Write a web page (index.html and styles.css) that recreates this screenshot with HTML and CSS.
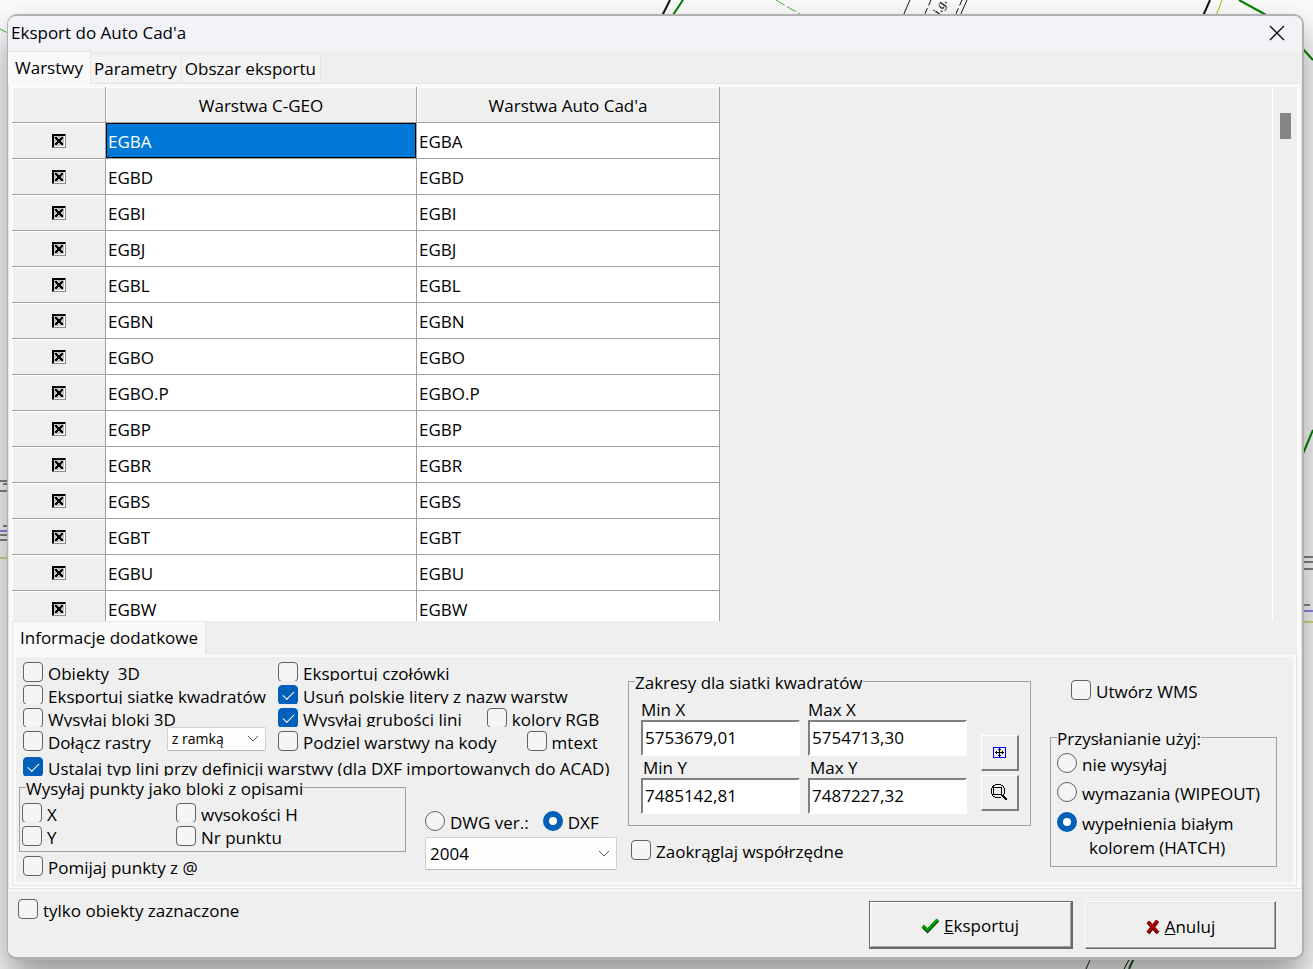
FILE: index.html
```html
<!DOCTYPE html>
<html lang="pl">
<head>
<meta charset="utf-8">
<title>Eksport do Auto Cad'a</title>
<link rel="stylesheet" href="styles.css">
</head>
<body>
<svg class="map" viewBox="0 0 1313 969" preserveAspectRatio="none" fill="none" aria-hidden="true">
  <g stroke="#008000" stroke-width="2">
    <path d="M683 0L673 15M1239 0L1268 16M1302 48L1313 60M1302 456L1313 430"/>
    <path d="M1134 958L1129 969" stroke="#205020"/>
  </g>
  <path d="M776 0L803 16M0 29L8 33" stroke="#40b040" stroke-dasharray="10 3"/>
  <g stroke="#111">
    <path d="M670 0L662 16M1210 0L1203 16" stroke-width="2"/>
    <path d="M910 0L903 16M967 0L960 16M1090 960L1086 969M1130 958L1124 969M0 481H8M3 484H8M0 491H8M3 526H8M0 535H8M0 540H8M1302 557H1313M1302 562H1313M1302 569H1313M1302 605H1310"/>
    <path d="M931 0L924 16M962 0L955 16" stroke-dasharray="6 3"/>
  </g>
  <path d="M1222 0L1216 16M0 558H8M1302 622H1313" stroke="#b8b000"/>
  <path d="M0 531H8M1302 611H1313" stroke="#2020d0"/>
  <text x="940" y="16" transform="rotate(-65 940 16)" class="map-text">j.g.</text>
</svg>

<main class="window">
  <header class="titlebar">
    <h1>Eksport do Auto Cad'a</h1>
    <button class="close" type="button" aria-label="Zamknij">
      <svg width="16" height="16" viewBox="0 0 16 16"><path d="M1 1L15 15M15 1L1 15" stroke="#111" stroke-width="1.4"/></svg>
    </button>
  </header>

  <nav class="tabs" role="tablist">
    <button class="tab active" type="button" role="tab" aria-selected="true">Warstwy</button>
    <button class="tab" type="button" role="tab">Parametry</button>
    <button class="tab" type="button" role="tab">Obszar eksportu</button>
  </nav>

  <section class="pane">
    <div class="grid-area">
      <div class="grid-scroll">
        <table class="layers">
          <colgroup><col class="col-mark"><col class="col-geo"><col class="col-cad"></colgroup>
          <thead><tr><th></th><th>Warstwa C-GEO</th><th>Warstwa Auto Cad'a</th></tr></thead>
          <tbody>
            <tr><td><input type="checkbox" class="mark" aria-label="EGBA" checked></td><td class="selected">EGBA</td><td>EGBA</td></tr>
            <tr><td><input type="checkbox" class="mark" aria-label="EGBD" checked></td><td>EGBD</td><td>EGBD</td></tr>
            <tr><td><input type="checkbox" class="mark" aria-label="EGBI" checked></td><td>EGBI</td><td>EGBI</td></tr>
            <tr><td><input type="checkbox" class="mark" aria-label="EGBJ" checked></td><td>EGBJ</td><td>EGBJ</td></tr>
            <tr><td><input type="checkbox" class="mark" aria-label="EGBL" checked></td><td>EGBL</td><td>EGBL</td></tr>
            <tr><td><input type="checkbox" class="mark" aria-label="EGBN" checked></td><td>EGBN</td><td>EGBN</td></tr>
            <tr><td><input type="checkbox" class="mark" aria-label="EGBO" checked></td><td>EGBO</td><td>EGBO</td></tr>
            <tr><td><input type="checkbox" class="mark" aria-label="EGBO.P" checked></td><td>EGBO.P</td><td>EGBO.P</td></tr>
            <tr><td><input type="checkbox" class="mark" aria-label="EGBP" checked></td><td>EGBP</td><td>EGBP</td></tr>
            <tr><td><input type="checkbox" class="mark" aria-label="EGBR" checked></td><td>EGBR</td><td>EGBR</td></tr>
            <tr><td><input type="checkbox" class="mark" aria-label="EGBS" checked></td><td>EGBS</td><td>EGBS</td></tr>
            <tr><td><input type="checkbox" class="mark" aria-label="EGBT" checked></td><td>EGBT</td><td>EGBT</td></tr>
            <tr><td><input type="checkbox" class="mark" aria-label="EGBU" checked></td><td>EGBU</td><td>EGBU</td></tr>
            <tr><td><input type="checkbox" class="mark" aria-label="EGBW" checked></td><td>EGBW</td><td>EGBW</td></tr>
          </tbody>
        </table>
      </div>
      <div class="scrollbar"><div class="thumb"></div></div>
    </div>

    <div class="tabs subtabs" role="tablist">
      <button class="tab active" type="button" role="tab" aria-selected="true">Informacje dodatkowe</button>
    </div>

    <div class="subpane">
      <div class="options">
        <div class="opt-left">
          <div class="pairs">
            <div class="row"><label class="check"><input type="checkbox">Obiekty&nbsp; 3D</label></div>
            <div class="row"><label class="check cut"><input type="checkbox">Eksportuj czołówki</label></div>
            <div class="row"><label class="check cut"><input type="checkbox">Eksportuj siatkę kwadratów</label></div>
            <div class="row"><label class="check cut"><input type="checkbox" checked>Usuń polskie litery z nazw warstw</label></div>
            <div class="row"><label class="check cut"><input type="checkbox">Wysyłaj bloki 3D</label></div>
            <div class="row split-a"><label class="check cut"><input type="checkbox" checked>Wysyłaj grubości lini</label><label class="check cut"><input type="checkbox">kolory RGB</label></div>
            <div class="row raster"><label class="check"><input type="checkbox">Dołącz rastry</label>
              <span class="combo small"><select aria-label="Ramka rastra"><option>z ramką</option></select><svg width="12" height="7" viewBox="0 0 12 7"><path d="M1 1L6 6L11 1"/></svg></span></div>
            <div class="row split-b"><label class="check"><input type="checkbox">Podziel warstwy na kody</label><label class="check"><input type="checkbox">mtext</label></div>
          </div>
          <label class="check cut wide"><input type="checkbox" checked>Ustalaj typ lini przy definicji warstwy (dla DXF importowanych do ACAD)</label>
          <div class="lower">
            <div class="points">
              <fieldset class="group">
                <legend>Wysyłaj punkty jako bloki z opisami</legend>
                <div class="points-body">
                  <label class="check cut"><input type="checkbox">X</label>
                  <label class="check cut"><input type="checkbox">wysokości H</label>
                  <label class="check"><input type="checkbox">Y</label>
                  <label class="check"><input type="checkbox">Nr punktu</label>
                </div>
              </fieldset>
              <label class="check skip"><input type="checkbox">Pomijaj punkty z @</label>
            </div>
            <div class="format">
              <div class="format-row">
                <label class="check"><input type="radio" name="format">DWG ver.:</label>
                <label class="check"><input type="radio" name="format" checked>DXF</label>
              </div>
              <span class="combo"><select aria-label="Wersja"><option>2004</option></select><svg width="12" height="7" viewBox="0 0 12 7"><path d="M1 1L6 6L11 1"/></svg></span>
            </div>
          </div>
        </div>

        <div class="opt-mid">
          <fieldset class="group">
            <legend>Zakresy dla siatki kwadratów</legend>
            <div class="ranges">
              <div class="fields">
                <label class="field">Min X<input type="text" value="5753679,01"></label>
                <label class="field">Max X<input type="text" value="5754713,30"></label>
                <label class="field"><span class="indent">Min Y</span><input type="text" value="7485142,81"></label>
                <label class="field"><span class="indent">Max Y</span><input type="text" value="7487227,32"></label>
              </div>
              <div class="tools">
                <button class="tool" type="button" aria-label="Cały zakres">
                  <svg width="13" height="11" viewBox="0 0 13 11" shape-rendering="crispEdges"><path d="M0 0H13V11H0ZM1 1V10H12V1Z" fill="#00f" fill-rule="evenodd"/><path d="M6 1H7V10H6ZM2 5H11V6H2ZM5 2H8V3H5ZM5 8H8V9H5ZM3 4H4V7H3ZM9 4H10V7H9Z" fill="#000"/></svg>
                </button>
                <button class="tool" type="button" aria-label="Wskaż zakres">
                  <svg width="17" height="17" viewBox="0 0 17 17" shape-rendering="crispEdges"><path d="M4 0H10V1H4ZM2 1H4V2H2ZM10 1H12V2H10ZM1 2H2V4H1ZM12 2H13V4H12ZM0 4H1V10H0ZM13 4H14V10H13ZM1 10H2V12H1ZM12 10H13V11H12ZM2 12H4V13H2ZM4 13H10V14H4ZM3 3H11V4H3ZM2 2H3V11H2ZM10 3H11V11H10ZM3 10H11V11H3ZM10 11H13V12H10ZM11 12H14V13H11ZM12 13H15V14H12ZM13 14H16V15H13ZM14 15H16V16H14Z" fill="#000"/></svg>
                </button>
              </div>
            </div>
          </fieldset>
          <label class="check round"><input type="checkbox">Zaokrąglaj współrzędne</label>
        </div>

        <div class="opt-right">
          <label class="check wms"><input type="checkbox">Utwórz WMS</label>
          <fieldset class="group">
            <legend>Przysłanianie użyj:</legend>
            <div class="cover">
              <label class="check"><input type="radio" name="cover">nie wysyłaj</label>
              <label class="check"><input type="radio" name="cover">wymazania (WIPEOUT)</label>
              <label class="check two-line"><input type="radio" name="cover" checked><span>wypełnienia białym<span class="second">kolorem (HATCH)</span></span></label>
            </div>
          </fieldset>
        </div>
      </div>
    </div>
  </section>

  <footer class="footer">
    <label class="check"><input type="checkbox">tylko obiekty zaznaczone</label>
    <div class="actions">
      <button class="action default" type="button">
        <svg width="17" height="16" viewBox="0 0 17 16"><path d="M1 8.5L5.5 13L16 2" fill="none" stroke="#003c10" stroke-width="3.6"/><path d="M1 7.5L5.5 12L15.5 1.5" fill="none" stroke="#00a000" stroke-width="2.6"/></svg>
        <span><u>E</u>ksportuj</span>
      </button>
      <button class="action" type="button">
        <svg width="14" height="16" viewBox="0 0 14 16"><path d="M2 3L12 14M11.500 2L2 14" fill="none" stroke="#500" stroke-width="4"/><path d="M2 2.500L11.500 13M11.500 1.500L2 13" fill="none" stroke="#b00000" stroke-width="2.600"/></svg>
        <span><u>A</u>nuluj</span>
      </button>
    </div>
  </footer>
</main>
</body>
</html>
```

FILE: styles.css
```css
* { box-sizing: border-box; }

body {
  margin: 0;
  min-height: 100vh;
  display: flex;
  padding: 14px 9px 9px 7px;
  background: #fafafa;
  color: #000;
  font: 17px/20px "Open Sans", "Noto Sans", sans-serif;
  overflow: hidden;
}

button, input, select { font: inherit; color: inherit; }
button { padding: 0; }

.map {
  position: absolute;
  inset: 0;
  width: 100%;
  height: 100%;
}
.map-text { font: italic 13px "Liberation Serif", serif; fill: #000; }

.window {
  position: relative;
  flex: 1;
  min-width: 0;
  display: flex;
  flex-direction: column;
  background: #efefef;
  border: 2px solid #b0b0b0;
  border-bottom-width: 3px;
  border-left-width: 1px;
  border-radius: 10px;
  overflow: hidden;
  box-shadow: 0 20px 36px rgba(0, 0, 0, .4);
}

.titlebar {
  display: flex;
  align-items: center;
  justify-content: space-between;
  height: 35px;
  padding: 0 17px 2px 3px;
  background: #f1f3f9;
}
.titlebar h1 { margin: 0; font-size: 17px; font-weight: 400; }
.close {
  display: flex;
  border: 0;
  background: none;
}

.tabs {
  display: flex;
  align-items: flex-end;
  height: 33px;
  margin-bottom: -1px;
}
.tab {
  height: 31px;
  padding: 1px 4px 0 3px;
  background: #f3f3f3;
  border: 1px solid #e5e5e5;
  border-left-width: 0;
  white-space: nowrap;
}
.tab.active {
  position: relative;
  height: 33px;
  padding: 0 7px;
  background: #f9f9f9;
  border-bottom: 0;
}

.pane {
  flex: 1;
  min-height: 0;
  display: flex;
  flex-direction: column;
  padding: 3px 4px 3px 3px;
  background: #f9f9f9;
  border: 1px solid #e5e5e5;
}

.grid-area {
  flex: 1 1 0;
  min-height: 144px;
  display: flex;
  background: #efefef;
}
.grid-scroll { flex: 1; min-width: 0; overflow: hidden; }
.scrollbar {
  width: 25px;
  padding: 26px 6px 0 7px;
  border-left: 1px solid #fff;
}
.thumb { height: 26px; background: #858585; }

.layers {
  width: 708px;
  table-layout: fixed;
  border-collapse: separate;
  border-spacing: 0;
}
.col-mark { width: 94px; }
.col-geo { width: 311px; }
.layers th, .layers td {
  height: 36px;
  padding: 2px 2px 0;
  border: solid #a0a0a0;
  border-width: 0 1px 1px 0;
  text-align: left;
  font-weight: 400;
}
.layers th, .layers td:first-child {
  background: #efefef;
  text-align: center;
  box-shadow: inset 1px 1px #fff;
}
.layers td:first-child { padding: 0; }
.layers td { background: #fff; }
.layers td.selected {
  background: #0078d7;
  color: #fff;
  box-shadow: inset 0 0 0 1px #000;
}
.mark {
  appearance: none;
  display: block;
  width: 14px;
  height: 14px;
  margin: 0 auto;
  border: 1px solid #000;
  border-right-color: #888;
  border-bottom-color: #888;
  background:
    linear-gradient(45deg, transparent 38%, #000 38%, #000 62%, transparent 62%) center / 8px 8px no-repeat,
    linear-gradient(-45deg, transparent 38%, #000 38%, #000 62%, transparent 62%) center / 8px 8px no-repeat,
    #c0c0c0;
  box-shadow: inset 1px 1px #000, inset -1px -1px #fff;
}

.subtabs { background: #efefef; }
.subtabs .tab { height: 33px; padding: 0 7px; border-left-width: 1px; }
.subpane {
  padding: 3px;
  border: 1px solid #e5e5e5;
  margin-bottom: -1px;
}
.options {
  display: flex;
  gap: 11px;
  min-height: 225px;
  background: #efefef;
}

.check {
  display: flex;
  align-items: flex-start;
  gap: 5px;
  height: 20px;
  line-height: 24px;
  white-space: nowrap;
}
.check.cut { height: 19px; overflow: hidden; }
.check input {
  appearance: none;
  flex: none;
  position: relative;
  width: 20px;
  height: 20px;
  margin: 0;
  border: 1px solid #626262;
  border-radius: 4px;
  background: #f5f5f5;
}
.check input:checked { background: #005fb8; border-color: #005fb8; }
.check input[type="checkbox"]:checked::after {
  content: "";
  position: absolute;
  left: 4px;
  top: 5px;
  width: 10px;
  height: 5px;
  border: solid #fff;
  border-width: 0 0 1px 1px;
  transform: rotate(-45deg);
}
.check input[type="radio"] { border-radius: 50%; }
.check input[type="radio"]:checked { border-width: 6px; background: #fff; }

.opt-left { flex: none; width: 601px; padding: 5px 0 0 3px; }
.pairs {
  display: grid;
  grid-template-columns: 255px 1fr;
  grid-auto-rows: 23px;
  padding-left: 4px;
}
.row { display: flex; }
.split-a { gap: 25px; }
.split-b { gap: 30px; }
.raster { gap: 16px; }
.wide { margin: 3px 2px 0 4px; }

.combo { position: relative; display: block; }
.combo select {
  appearance: none;
  display: block;
  width: 100%;
  height: 33px;
  padding: 0 4px;
  background: #fdfdfd;
  border: 1px solid #d0d0d0;
  border-bottom-color: #b8b8b8;
  border-radius: 2px;
}
.combo svg {
  position: absolute;
  right: 7px;
  top: 13px;
  fill: none;
  stroke: #555;
  pointer-events: none;
}
.combo.small { width: 99px; margin-top: -4px; }
.combo.small select { height: 24px; font-size: 14px; }
.combo.small svg { top: 8px; }

.lower { display: flex; gap: 19px; }
.points { width: 387px; }
.format { width: 192px; padding-top: 35px; }
.format-row { display: flex; gap: 14px; margin-bottom: 6px; }
.skip { margin: 4px 0 0 4px; }

.group {
  margin: 0;
  padding: 0;
  border: 1px solid #a0a0a0;
  min-width: 0;
}
.group legend {
  margin-left: 6px;
  padding: 4px 0 0;
  line-height: 18px;
  white-space: nowrap;
}
.points-body {
  display: grid;
  grid-template-columns: 154px 1fr;
  row-gap: 4px;
  padding: 5px 2px;
}

.opt-mid { flex: none; width: 403px; padding-top: 13px; }
.ranges { display: flex; gap: 14px; padding: 8px 11px 11px 12px; }
.fields {
  flex: 1;
  display: grid;
  grid-template-columns: 1fr 1fr;
  gap: 2px 8px;
}
.field { display: block; line-height: 20px; }
.field input {
  display: block;
  width: 100%;
  height: 36px;
  padding: 0 2px 2px;
  background: #fff;
  border: 2px solid;
  border-color: #808080 #fff #fff #808080;
}
.indent { padding-left: 2px; }
.tools { display: flex; flex-direction: column; gap: 4px; padding-top: 35px; }
.tool {
  display: flex;
  align-items: center;
  justify-content: center;
  width: 38px;
  height: 36px;
  background: #efefef;
  border: solid;
  border-width: 1px 2px 2px 1px;
  border-color: #fff #808080 #808080 #fff;
}
.round { margin: 14px 0 0 3px; }

.opt-right { flex: 1; margin-left: 8px; padding: 23px 16px 0 0; }
.wms { margin: 0 0 26px 21px; }
.cover { padding: 5px 6px 6px; }
.cover .check + .check { margin-top: 9px; }
.cover .check.two-line { height: 48px; margin-top: 10px; }
.second { display: block; padding-left: 7px; }

.footer {
  display: flex;
  justify-content: space-between;
  height: 67px;
  padding: 8px 26px 8px 10px;
  margin-top: 1px;
  border-top: 1px solid #fff;
}
.actions { display: flex; gap: 12px; padding-top: 2px; }
.action {
  display: flex;
  align-items: center;
  justify-content: center;
  gap: 5px;
  width: 191px;
  height: 48px;
  padding-top: 3px;
  background: #efefef;
  border: 1px solid;
  border-color: #fff #696969 #696969 #fff;
  box-shadow: inset -1px -1px #a0a0a0, inset 1px 1px #e8e8e8;
}
.action.default {
  width: 204px;
  border: solid #696969;
  border-width: 1px 2px 2px 1px;
  box-shadow: inset 1px 1px #fff, inset -1px -1px #a0a0a0;
}
```
